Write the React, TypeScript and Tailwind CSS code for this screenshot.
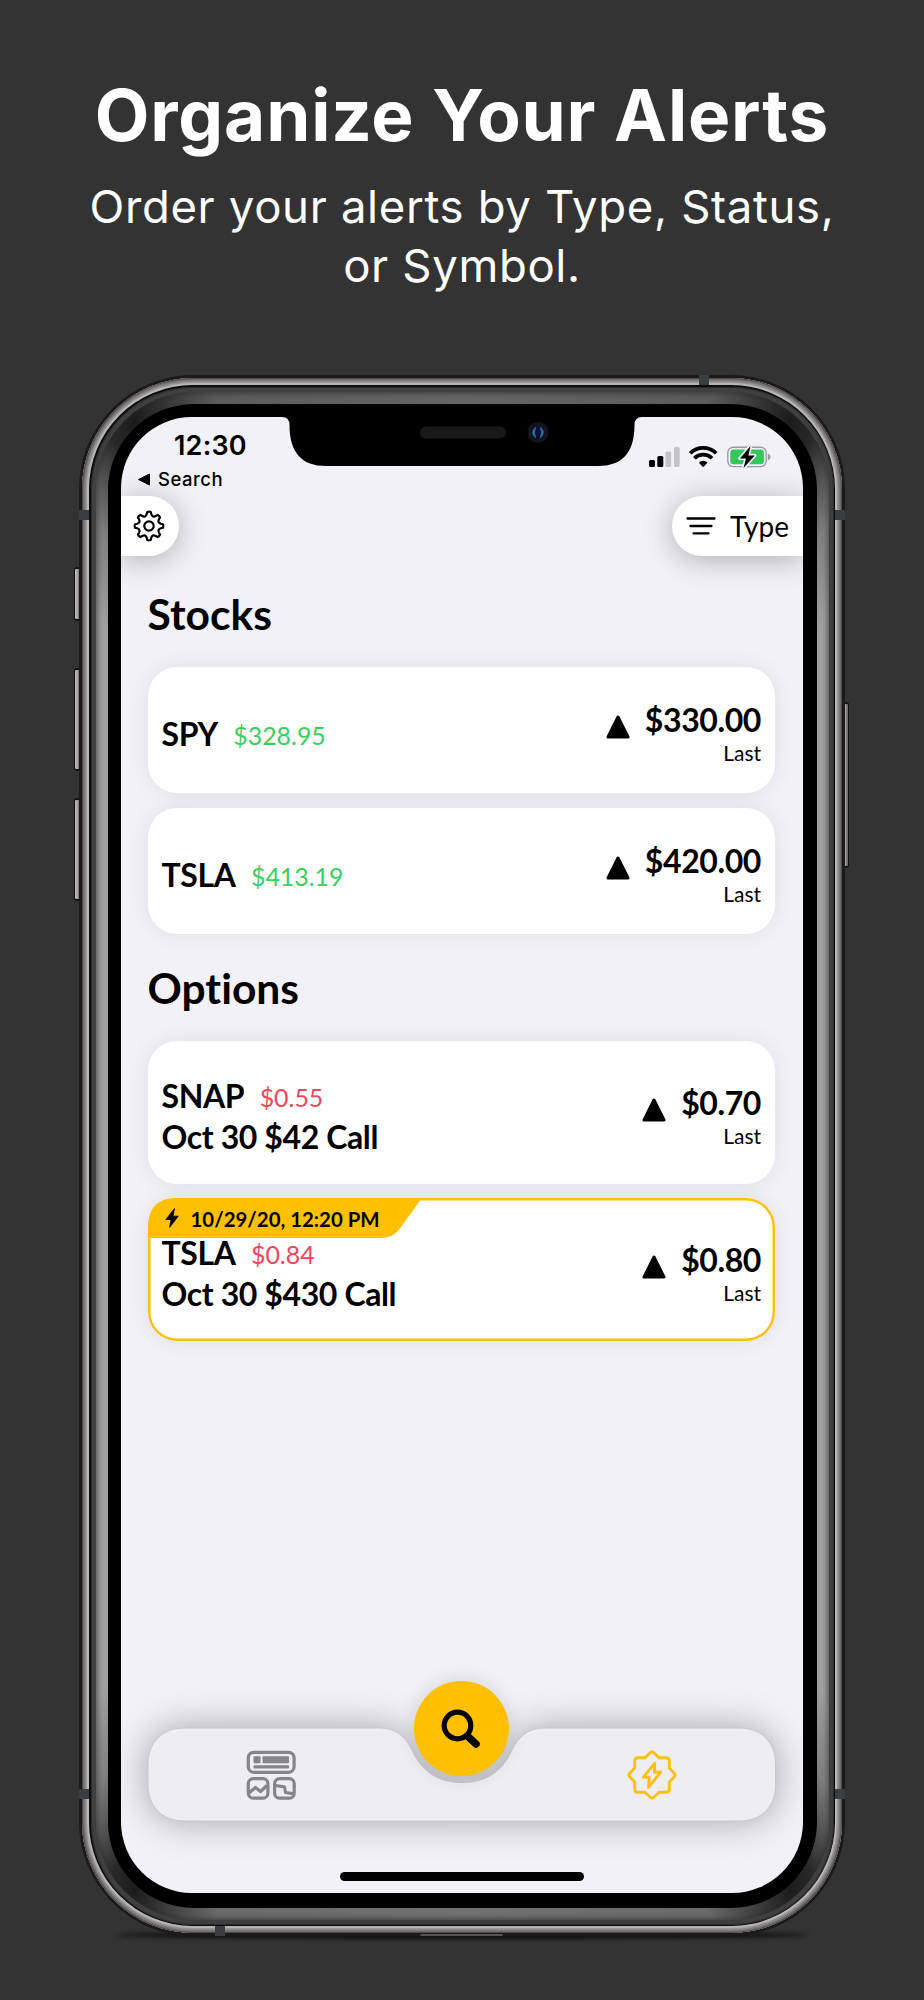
import React from 'react';

interface Alert {
  symbol: string;
  price: string;
  up: boolean;
  contract?: string;
  target: string;
  triggeredAt?: string;
}

const stocks: Alert[] = [
  { symbol: 'SPY', price: '$328.95', up: true, target: '$330.00' },
  { symbol: 'TSLA', price: '$413.19', up: true, target: '$420.00' },
];

const options: Alert[] = [
  { symbol: 'SNAP', price: '$0.55', up: false, contract: 'Oct 30 $42 Call', target: '$0.70' },
  {
    symbol: 'TSLA',
    price: '$0.84',
    up: false,
    contract: 'Oct 30 $430 Call',
    target: '$0.80',
    triggeredAt: '10/29/20, 12:20 PM',
  },
];

function GearIcon() {
  const teeth = Array.from({ length: 8 }, (_, i) => i * 45);
  const point = (radius: number, deg: number) => {
    const a = ((deg - 90) * Math.PI) / 180;
    return `${(radius * Math.cos(a)).toFixed(2)} ${(radius * Math.sin(a)).toFixed(2)}`;
  };
  const d = teeth
    .map(
      (t, i) =>
        `${i === 0 ? 'M' : 'L'}${point(14.1, t - 7)} Q${point(14.7, t)} ${point(14.1, t + 7)} L${point(12, t + 11)} Q${point(9, t + 22.5)} ${point(12, t + 34)}`,
    )
    .join(' ');
  return (
    <svg viewBox="-16 -16 32 32" className="h-8 w-8" fill="none" stroke="black" strokeWidth="2.2" strokeLinejoin="round">
      <path d={`${d} Z`} />
      <circle r="4.7" />
    </svg>
  );
}

function StatusIcons() {
  return (
    <svg viewBox="0 0 124 24" className="h-6 w-[124px]">
      <rect x="1" y="15" width="6" height="7" rx="1.5" />
      <rect x="9.3" y="11" width="6" height="11" rx="1.5" />
      <rect x="17.5" y="6.5" width="5.6" height="15.5" rx="1.5" fill="#c3c2c8" />
      <rect x="26" y="2" width="5.6" height="20" rx="1.5" fill="#c3c2c8" />
      <g fill="none" stroke="black" strokeWidth="3.7">
        <path d="M42.2 8.2 A18.5 18.5 0 0 1 68.2 8.2" />
        <path d="M46.4 13.3 A12.5 12.5 0 0 1 64 13.3" />
      </g>
      <path d="M50.8 17.6 A6.4 6.4 0 0 1 59.6 17.6 L56.2 21.2 Q55.2 22.2 54.2 21.2 Z" />
      <rect x="79.8" y="2.2" width="38.4" height="19.4" rx="5.5" fill="none" stroke="#9b9aa0" strokeWidth="1.4" />
      <rect x="82.3" y="4.6" width="33.6" height="14.6" rx="3" fill="#34c759" />
      <path d="M119.8 8.5 Q122.6 9.6 122.6 12 Q122.6 14.4 119.8 15.5 Z" fill="#9b9aa0" />
      <path
        d="M102.5 1 L92 13.4 H98 L95.5 23 L106.8 10.4 H100.4 Z"
        stroke="#f2f1f7"
        strokeWidth="3.4"
        strokeLinejoin="round"
        paintOrder="stroke"
      />
    </svg>
  );
}

function Triangle() {
  return (
    <svg viewBox="0 0 24 24" className="h-6 w-6">
      <path d="M12 2 L22 22 H2 Z" stroke="black" strokeWidth="3" strokeLinejoin="round" />
    </svg>
  );
}

function TriggeredTag({ time }: { time: string }) {
  return (
    <div className="absolute left-0 top-0 flex h-10 w-[272px] items-center pl-[17px]">
      <svg viewBox="0 0 272 40" className="absolute inset-0 h-full w-full">
        <path d="M0 40 V29 Q0 0 29 0 H272 V2.500 L253 29 Q246 40 234 40 Z" fill="#ffc001" />
      </svg>
      <svg viewBox="0 0 14 20" className="relative h-5 w-3.5">
        <path d="M9.5 0.5 L0.8 11.5 H6 L4.6 19.5 L13.2 8.2 H8 Z" stroke="black" strokeWidth="0.8" strokeLinejoin="round" />
      </svg>
      <span className="relative ml-3 mt-px whitespace-nowrap text-[20.4px] font-bold leading-6">{time}</span>
    </div>
  );
}

function AlertCard({ alert }: { alert: Alert }) {
  return (
    <div
      className={`relative flex items-center justify-between rounded-[29px] bg-white px-3.5 pt-1.5 ${
        alert.contract ? 'h-[142.5px]' : 'h-[126.5px]'
      } ${
        alert.triggeredAt
          ? 'shadow-[inset_0_0_0_2.5px_#fcc010,0_0_22px_rgba(30,20,60,0.08)]'
          : 'shadow-[0_0_22px_rgba(30,20,60,0.08)]'
      }`}
    >
      {alert.triggeredAt && <TriggeredTag time={alert.triggeredAt} />}
      <div className="relative flex flex-col gap-[3px]">
        <div className="flex items-end gap-[15.5px]">
          <span className="relative top-px text-[32px] font-bold leading-[38px] tracking-[-0.4px]">{alert.symbol}</span>
          <span className={`text-[24.9px] leading-[34px] ${alert.up ? 'text-[#3dcd63]' : 'text-[#ee4760]'}`}>
            {alert.price}
          </span>
        </div>
        {alert.contract && (
          <div className="relative top-[1.5px] text-[32px] font-bold leading-[38px] tracking-[-0.4px]">
            {alert.contract}
          </div>
        )}
      </div>
      <div className="flex flex-col items-end">
        <div className="relative top-px flex items-center gap-[15px]">
          <div className="pt-3.5">
            <Triangle />
          </div>
          <span className="text-[32px] font-bold leading-[38px] tracking-[-0.4px]">{alert.target}</span>
        </div>
        <span className="mt-[3px] text-[21px] leading-6">Last</span>
      </div>
    </div>
  );
}

function Section({ title, alerts }: { title: string; alerts: Alert[] }) {
  return (
    <section className="pt-[29px]">
      <h2 className="text-[42.5px] font-bold leading-[50px]">{title}</h2>
      <div className="mt-7 flex flex-col gap-[14.5px]">
        {alerts.map((a) => (
          <AlertCard key={a.symbol} alert={a} />
        ))}
      </div>
    </section>
  );
}

function Notch() {
  return (
    <div className="absolute left-[160.5px] top-0 h-[49px] w-[360px]">
      <svg viewBox="0 0 360 49" className="h-full w-full">
        <path d="M0 -1 V0 Q7.5 0 7.5 8 C7.5 36 20 49 44 49 H316 C340 49 352.500 36 352.500 8 Q352.500 0 360 0 V-1 Z" />
        <rect x="138" y="9.500" width="86" height="12" rx="6" fill="#191919" />
        <circle cx="256" cy="15.500" r="10.500" fill="#14151b" />
        <circle cx="256" cy="15.500" r="6.300" fill="#0b1230" />
        <path d="M253.500 10.500 A6 6 0 0 0 253.500 20.500 Q251.500 15.500 253.500 10.500 Z" fill="#2f6fa8" stroke="#2f6fa8" />
        <path d="M258.500 10.500 A6 6 0 0 1 258.500 20.500 Q260.500 15.500 258.500 10.500 Z" fill="#2f6fa8" stroke="#2f6fa8" />
      </svg>
    </div>
  );
}

function TabBar() {
  return (
    <div className="relative ml-[26.5px] h-[93px] w-[627.5px] self-start">
      <svg
        viewBox="0 0 627.5 93"
        className="absolute inset-0 h-full w-full overflow-visible drop-shadow-[0_0_18px_rgba(0,0,0,0.32)]"
      >
        <path
          d="M36 0 H232 C248 0 258 9 264 22 C273 42 288 54.500 314 54.500 C340 54.500 355 42 364 22 C370 9 380 0 396 0 H591.500 C614 0 627.500 15 627.500 36 V57 C627.500 78 614 93 591.500 93 H36 C14 93 0 78 0 57 V36 C0 15 14 0 36 0 Z"
          fill="#eeedf2"
          stroke="#c8c7cc"
          strokeWidth="1"
        />
      </svg>
      <div className="relative flex h-full items-center justify-between px-[98px]">
        <svg viewBox="0 0 50 50" className="h-[50px] w-[50px]" fill="none" stroke="#858489" strokeWidth="3.2">
          <rect x="2.3" y="2.300" width="45.800" height="20" rx="5.500" />
          <rect x="2.3" y="28.600" width="19.600" height="19.600" rx="5" />
          <rect x="28.600" y="28.600" width="19.600" height="19.600" rx="5" />
          <path d="M3 43 L9.500 37.500 L14.500 41.500 L21 35.500" strokeLinejoin="round" />
          <path d="M29 35.500 L38.500 36.800 L39.500 42.500 L48 43.800" strokeLinejoin="round" />
          <g fill="#858489" stroke="none">
            <rect x="7.500" y="6.300" width="7" height="7" rx="1" />
            <rect x="16.500" y="6.300" width="26.500" height="7" rx="1" />
            <rect x="7.500" y="15.300" width="35.500" height="3.300" rx="1" />
          </g>
        </svg>
        <svg viewBox="-25 -25 50 50" className="h-[50px] w-[50px]" fill="none" stroke="#fbc010" strokeWidth="2.9" strokeLinejoin="round">
          <path d="M-1.800 -22.300 Q0 -24 1.800 -22.300 L7 -17.300 H14 Q17.300 -17.300 17.300 -14 V-7 L22.300 -1.800 Q24 0 22.300 1.800 L17.300 7 V14 Q17.300 17.300 14 17.300 H7 L1.800 22.300 Q0 24 -1.800 22.300 L-7 17.300 H-14 Q-17.300 17.300 -17.300 14 V7 L-22.300 1.800 Q-24 0 -22.300 -1.800 L-17.300 -7 V-14 Q-17.300 -17.300 -14 -17.300 H-7 Z" />
          <path d="M2.800 -11.800 L-8.600 2.200 H-2.800 L-3.400 12.300 L8.600 -2.800 H2.400 Z" />
        </svg>
      </div>
      <button className="absolute -top-[47px] left-[266px] flex h-[95px] w-[95px] items-center justify-center rounded-full bg-[#ffc001] shadow-[0_0_20px_rgba(0,0,0,0.14)]">
        <svg viewBox="0 0 40 40" className="h-10 w-10" fill="none" stroke="black" strokeLinecap="round">
          <circle cx="16.500" cy="16.500" r="13.300" strokeWidth="5.200" />
          <path d="M27.500 28 L35 35" strokeWidth="7.500" />
        </svg>
      </button>
    </div>
  );
}

function Screen() {
  return (
    <div className="relative flex h-[1476px] w-[682px] flex-col overflow-hidden rounded-[71px] bg-[#f2f1f7] font-[Lato,sans-serif] text-black [font-variant-ligatures:none]">
      <Notch />
      <div className="flex h-[79px] justify-between pl-4 pr-[31px] font-[Inter,sans-serif]">
        <div className="flex flex-col">
          <span className="ml-[37px] mt-[13px] text-[27px] font-semibold leading-8 tracking-[0.2px]">12:30</span>
          <div className="mt-[5px] flex items-center gap-[7px]">
            <svg viewBox="0 0 14 13" className="h-[13px] w-3.5">
              <path d="M1.500 6.500 L12.500 1 V12 Z" stroke="black" strokeLinejoin="round" />
            </svg>
            <span className="text-[18.5px] font-medium leading-6 tracking-[0.5px]">Search</span>
          </div>
        </div>
        <div className="pt-7">
          <StatusIcons />
        </div>
      </div>
      <div className="flex h-[60px] justify-between">
        <button className="flex w-[58px] items-center justify-center rounded-r-[30px] bg-white pr-0.5 shadow-[0_4px_30px_rgba(0,0,0,0.28)]">
          <GearIcon />
        </button>
        <button className="flex w-[131px] items-center gap-3.5 rounded-l-[30px] bg-white pl-3.5 shadow-[0_4px_30px_rgba(0,0,0,0.28)]">
          <svg viewBox="0 0 30 20" className="h-5 w-[30px]" stroke="black" strokeWidth="2.3" strokeLinecap="round">
            <path d="M1.500 2.500 H28.500 M4.500 10 H25.500 M7.500 17.300 H22.500" />
          </svg>
          <span className="text-[28px] leading-8">Type</span>
        </button>
      </div>
      <div className="pl-[26.5px] pr-7 pt-[3.5px]">
        <Section title="Stocks" alerts={stocks} />
        <Section title="Options" alerts={options} />
      </div>
      <div className="mt-auto flex flex-col items-center pb-3">
        <TabBar />
        <div className="mt-[51px] h-[9px] w-[244px] rounded-full bg-black" />
      </div>
    </div>
  );
}

function Phone() {
  return (
    <div className="relative h-[1561px] w-[766px]">
      <div className="absolute bottom-[-3px] left-9 right-9 h-2 rounded-[50%] bg-black/70 blur-[2px]" />
      {/* side buttons */}
      <div className="absolute -left-[5px] top-[192px] h-[54px] w-2 rounded-l-[3px] border-y-2 border-l border-[#151313] bg-[linear-gradient(90deg,#b5b2b2_0_2px,#6f6c6c_4px,#1b1919_5px)]" />
      <div className="absolute -left-[5px] top-[293px] h-[103px] w-2 rounded-l-[3px] border-y-2 border-l border-[#151313] bg-[linear-gradient(90deg,#b5b2b2_0_2px,#6f6c6c_4px,#1b1919_5px)]" />
      <div className="absolute -left-[5px] top-[423px] h-[103px] w-2 rounded-l-[3px] border-y-2 border-l border-[#151313] bg-[linear-gradient(90deg,#b5b2b2_0_2px,#6f6c6c_4px,#1b1919_5px)]" />
      <div className="absolute -right-[4px] top-[327px] h-[166px] w-2 rounded-r-[3px] border-y-2 border-r border-[#151313] bg-[linear-gradient(270deg,#6f6c6c_0_1px,#b5b2b2_3px,#1b1919_4px)]" />
      {/* metal frame, glass edge and bezel, from the outside in */}
      <div className="relative h-full rounded-[114px] bg-[#1b1919] p-[3px]">
        <div className="h-full rounded-[111px] bg-[#b6b4b4] p-[7px] shadow-[inset_0_0_0_1px_#4e4b4b,inset_0_0_0_2px_#6e6b6b,inset_0_0_0_3px_#7d7a7a,inset_0_0_0_4px_#8c8989,inset_0_0_0_5px_#9c9999]">
          <div className="h-full rounded-[104px] bg-[#0d0c0c] p-[1.5px]">
            <div className="h-full rounded-[102px] bg-[#3f3f3f] p-[5px] shadow-[inset_0_0_0_1px_#2b2b2b]">
              <div className="h-full rounded-[98px] bg-[conic-gradient(#666_0deg,#5c5c5c_18deg,#1c1c1c_24deg,#2a2a2a_26deg,#808080_30deg,#a0a0a0_34deg,#a0a0a0_146deg,#808080_150deg,#2a2a2a_154deg,#1c1c1c_156deg,#6a6a6a_162deg,#727272_180deg,#6a6a6a_198deg,#1c1c1c_204deg,#2a2a2a_206deg,#808080_210deg,#a0a0a0_214deg,#a0a0a0_326deg,#808080_330deg,#2a2a2a_334deg,#1c1c1c_336deg,#5c5c5c_342deg,#666_360deg)] p-[12px] shadow-[inset_0_0_5px_2px_rgba(40,40,40,0.55)]">
                <div className="h-full rounded-[86px] bg-black p-[13.5px]">
                  <Screen />
                </div>
              </div>
            </div>
          </div>
        </div>
      </div>
      {/* antenna bands */}
      <div className="absolute left-[620px] top-0 h-2.5 w-2.5 bg-[#3a3d42]" />
      <div className="absolute bottom-0 left-[136px] h-2.5 w-2.5 bg-[#3a3d42]" />
      <div className="absolute left-0 top-[135px] h-2.5 w-2.5 bg-[#3a3d42]" />
      <div className="absolute right-0 top-[135px] h-2.5 w-2.5 bg-[#3a3d42]" />
      <div className="absolute left-0 top-[1414px] h-2.5 w-2.5 bg-[#3a3d42]" />
      <div className="absolute right-0 top-[1414px] h-2.5 w-2.5 bg-[#3a3d42]" />
      <div className="absolute bottom-0 left-[341px] h-0.5 w-[83px] rounded-t-full bg-[#555]" />
    </div>
  );
}

export default function App() {
  return (
    <main className="flex h-[2000px] w-[924px] flex-col items-center overflow-hidden bg-[#333] text-white">
      <header className="h-[375px] pt-[73px] text-center font-[Inter,sans-serif]">
        <h1 className="whitespace-nowrap text-[71px] font-bold leading-[84px] tracking-[0.85px]">Organize Your Alerts</h1>
        <p className="mt-5 text-[45.5px] leading-[59px] tracking-[0.65px]">
          Order your alerts by Type, Status,
          <br />
          or Symbol.
        </p>
      </header>
      <Phone />
    </main>
  );
}
